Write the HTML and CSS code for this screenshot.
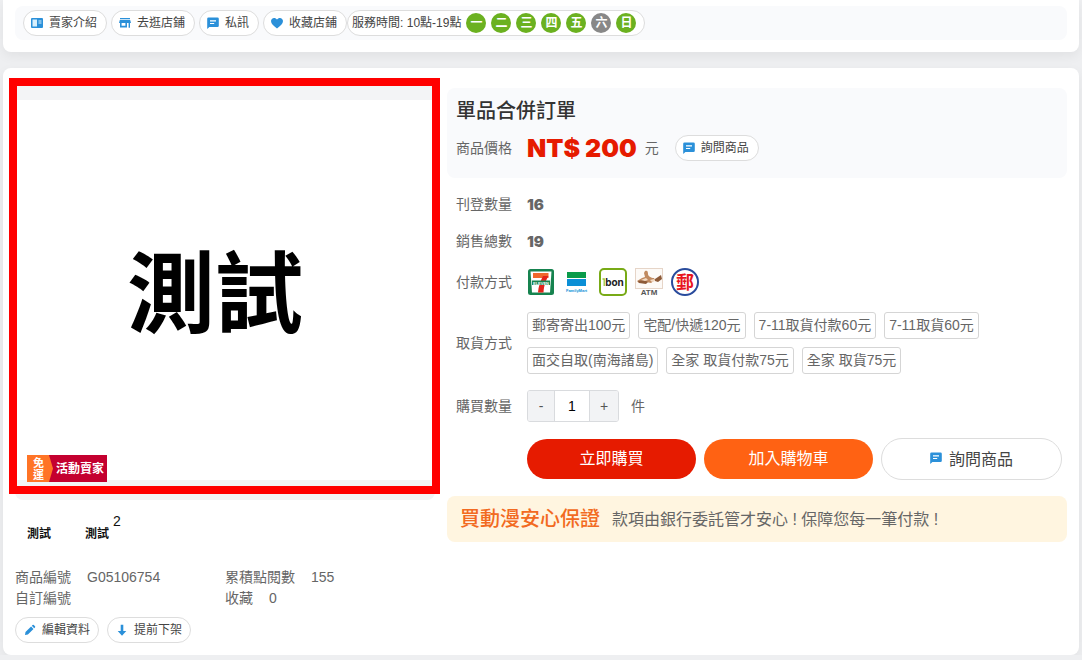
FILE: index.html
```
<!DOCTYPE html>
<html lang="zh-Hant">
<head>
    <meta charset="UTF-8">
    <meta name="viewport" content="width=device-width, initial-scale=1.0">
    <title>單品合併訂單</title>
    <link rel="stylesheet" href="styles.css">
</head>
<body>
    <svg class="symbols" aria-hidden="true">
        <symbol id="icon-chat" viewBox="0 0 12 12">
            <path d="M1.5 0.5h9a1.3 1.3 0 0 1 1.3 1.3v7a1.3 1.3 0 0 1-1.3 1.3H2.4L0.2 12V1.8A1.3 1.3 0 0 1 1.5 0.5z" fill="#2b90d9"/>
            <path d="M3 3.8h6M3 6.5h4.2" stroke="#fff" stroke-width="1.2"/>
        </symbol>
    </svg>

    <header class="card seller">
        <div class="seller-bar">
            <nav class="seller-links">
                <a href="#" class="pill">
                    <svg class="icon" viewBox="0 0 12 12"><path d="M1 1h10a1 1 0 0 1 1 1v8a1 1 0 0 1-1 1H1a1 1 0 0 1-1-1V2a1 1 0 0 1 1-1z" fill="#2b90d9"/><path d="M1.5 2.5H6v7H1.5z" fill="#d9f0fc"/><path d="M7.5 4h3M7.5 6h3" stroke="#d9f0fc"/></svg>
                    賣家介紹
                </a>
                <a href="#" class="pill">
                    <svg class="icon" viewBox="0 0 12 12"><path d="M1 1h10v1.2H1zM0.8 3h10.4l0.8 3H0zM1 6h1.6v2.8h3.8V6H8v4.6H1zM9.6 6h1.4v4.8H9.6z" fill="#2b90d9"/></svg>
                    去逛店鋪
                </a>
                <a href="#" class="pill">
                    <svg class="icon"><use href="#icon-chat"/></svg>
                    私訊
                </a>
                <a href="#" class="pill">
                    <svg class="icon" viewBox="0 0 12 12"><path d="M6 11.6C2.5 8.8 0 6.8 0 4.1 0 2.2 1.4 0.9 3.1 0.9c1.2 0 2.2 0.6 2.9 1.6C6.7 1.5 7.7 0.9 8.9 0.9 10.6 0.9 12 2.2 12 4.1 12 6.8 9.5 8.8 6 11.6z" fill="#2b90d9"/></svg>
                    收藏店鋪
                </a>
            </nav>
            <div class="pill hours">
                <span>服務時間: 10點-19點</span>
                <span class="day">一</span>
                <span class="day">二</span>
                <span class="day">三</span>
                <span class="day">四</span>
                <span class="day">五</span>
                <span class="day day-off">六</span>
                <span class="day">日</span>
            </div>
        </div>
    </header>

    <main class="card product">
        <section class="media">
            <div class="gallery">
                <div class="photo">測試</div>
                <div class="frame"></div>
                <div class="badge">
                    <span class="badge-free">免<br>運</span>
                    <span class="badge-text">活動賣家</span>
                </div>
            </div>
            <div class="thumbs">
                <span class="thumb">測試</span>
                <span class="thumb">測試<sup>2</sup></span>
            </div>
            <div class="meta">
                <div>商品編號<span class="meta-value">G05106754</span></div>
                <div>累積點閱數<span class="meta-value">155</span></div>
                <div>自訂編號</div>
                <div>收藏<span class="meta-value">0</span></div>
            </div>
            <div class="tools">
                <button type="button" class="pill">
                    <svg class="icon" viewBox="0 0 12 12"><path d="M1 11l0.5-2.9L7.1 2.5l2.4 2.4L3.9 10.5zM7.8 1.8l0.8-0.8q0.6-0.5 1.2 0l1.2 1.2q0.5 0.6 0 1.2l-0.8 0.8z" fill="#2b90d9"/></svg>
                    編輯資料
                </button>
                <button type="button" class="pill">
                    <svg class="icon" viewBox="0 0 12 12"><path d="M4.7 0.8h2.6v6.2h3L6 11.8 1.7 7h3z" fill="#2b90d9"/></svg>
                    提前下架
                </button>
            </div>
        </section>

        <section class="info">
            <div class="summary">
                <h1>單品合併訂單</h1>
                <div class="price-row">
                    <span class="label">商品價格</span>
                    <strong class="price">NT$ 200</strong>
                    <span class="unit">元</span>
                    <button type="button" class="pill">
                        <svg class="icon"><use href="#icon-chat"/></svg>
                        詢問商品
                    </button>
                </div>
            </div>

            <div class="details">
                <div class="row">
                    <span class="label">刊登數量</span>
                    <strong class="count">16</strong>
                </div>
                <div class="row">
                    <span class="label">銷售總數</span>
                    <strong class="count">19</strong>
                </div>
                <div class="row">
                    <span class="label">付款方式</span>
                    <div class="payments">
                        <svg viewBox="0 0 28 28" role="img" aria-label="7-11">
                            <rect x="1" y="1" width="26" height="26" rx="2.5" fill="#16834f"/>
                            <path d="M3.5 3.5h21l-1.5 21h-18z" fill="#fff"/>
                            <path d="M6 5h15.5v5H6z" fill="#f0682c"/>
                            <path d="M16 8h5.5c-2.5 4-4.5 9-5 16.5h-5.5c0.4-6 2.5-12 5-16.5z" fill="#e2231a"/>
                            <rect x="5" y="12.5" width="18" height="4.5" fill="#16834f"/>
                            <text x="14" y="16.5" class="logo-eleven">ELEVEN</text>
                        </svg>
                        <svg viewBox="0 0 28 28" role="img" aria-label="FamilyMart">
                            <rect x="4" y="4" width="19" height="6" fill="#0a9b4a"/>
                            <rect x="4" y="11" width="19" height="7" fill="#0b8fd6"/>
                            <text x="13.5" y="23.5" class="logo-family">FamilyMart</text>
                        </svg>
                        <svg viewBox="0 0 28 28" role="img" aria-label="ibon">
                            <rect x="1" y="1" width="26" height="26" rx="4" fill="#fff" stroke="#78aa16" stroke-width="2"/>
                            <path d="M3.5 11h1.7v7" fill="none" stroke="#9bc93c" stroke-width="1.3"/>
                            <text x="15.5" y="18" class="logo-ibon">bon</text>
                        </svg>
                        <svg viewBox="0 0 28 28" role="img" aria-label="ATM">
                            <rect x="0.5" y="0.5" width="27" height="20" fill="#fdfaf7" stroke="#e6d5c8"/>
                            <path d="M10 3c2-1 3 0 3 3 0 2 3 4 6 4l1 2-4 3-5-1-7 1-2-2 5-3 3-1-1-4z" fill="#c08a60"/>
                            <path d="M3 13l6-1 4 2-2 2-7-1zM20 11l6-4 1 4-4 3-3-1z" fill="#8d5a38"/>
                            <path d="M6 12l5-2 2 2-3 1zM15 12l4-1 1 2-3 1z" fill="#f3dac3"/>
                            <text x="14" y="27" class="logo-atm">ATM</text>
                        </svg>
                        <svg viewBox="0 0 28 28" role="img" aria-label="郵局">
                            <circle cx="14" cy="14" r="13" fill="#fff" stroke="#294b9c" stroke-width="2"/>
                            <text x="14" y="20.5" class="logo-post">郵</text>
                        </svg>
                    </div>
                </div>
                <div class="row">
                    <span class="label">取貨方式</span>
                    <div class="tags">
                        <span class="tag">郵寄寄出100元</span>
                        <span class="tag">宅配/快遞120元</span>
                        <span class="tag">7-11取貨付款60元</span>
                        <span class="tag">7-11取貨60元</span>
                        <span class="tag">面交自取(南海諸島)</span>
                        <span class="tag">全家 取貨付款75元</span>
                        <span class="tag">全家 取貨75元</span>
                    </div>
                </div>
                <div class="row">
                    <label class="label" for="qty">購買數量</label>
                    <div class="stepper">
                        <button type="button" onclick="changeQty(-1)">-</button>
                        <input type="text" id="qty" value="1" inputmode="numeric">
                        <button type="button" onclick="changeQty(1)">+</button>
                    </div>
                    <span class="piece">件</span>
                </div>
                <div class="actions">
                    <button type="button" class="action buy">立即購買</button>
                    <button type="button" class="action cart">加入購物車</button>
                    <button type="button" class="action ask">
                        <svg class="icon"><use href="#icon-chat"/></svg>
                        詢問商品
                    </button>
                </div>
            </div>

            <div class="guarantee">
                <strong>買動漫安心保證</strong>
                <span>款項由銀行委託管才安心 ! 保障您每一筆付款 !</span>
            </div>
        </section>
    </main>

    <script>
        function changeQty(step) {
            const input = document.getElementById("qty");
            const value = parseInt(input.value, 10) || 1;
            input.value = Math.min(16, Math.max(1, value + step));
        }
    </script>
</body>
</html>
```

FILE: styles.css
```
* {
    box-sizing: border-box;
}
body {
    margin: 0;
    background-color: #eeeff1;
    color: #666;
    font-family: "Liberation Sans", "Noto Sans CJK TC", sans-serif;
    font-size: 14px;
    line-height: 21px;
}
button,
input {
    font-family: inherit;
}
.symbols {
    display: none;
}
.card {
    margin: 0 3px 16px;
    padding: 12px;
    background-color: #fff;
    border-radius: 8px;
    box-shadow: 0 4px 12px rgba(0, 0, 0, 0.06);
}
.seller {
    padding-top: 6px;
    border-radius: 0 0 8px 8px;
}
.seller-bar {
    display: flex;
    padding: 4px 8px;
    background-color: #f9fafc;
    border-radius: 8px;
}
.seller-links {
    display: flex;
    gap: 4px;
}
.pill {
    display: flex;
    align-items: center;
    gap: 6px;
    height: 26px;
    padding: 0 9px 0 7px;
    border: 1px solid #ddd;
    border-radius: 13px;
    background-color: #fff;
    color: #444;
    font-size: 12px;
    line-height: 24px;
    text-decoration: none;
    white-space: nowrap;
}
.icon {
    width: 12px;
    height: 12px;
    flex: none;
}
.hours {
    gap: 5px;
    padding: 0 8px 0 4px;
}
.day {
    width: 20px;
    height: 20px;
    border-radius: 50%;
    background-color: #6bb120;
    color: #fff;
    font-weight: bold;
    line-height: 20px;
    text-align: center;
}
.day-off {
    background-color: #888;
}

.product {
    display: grid;
    grid-template-columns: 420fr 620fr;
    gap: 12px;
    margin-bottom: 0;
}
.gallery {
    position: relative;
    padding: 20px 0;
    background-color: #f3f4f6;
    border-radius: 8px;
}
.photo {
    display: flex;
    align-items: center;
    justify-content: center;
    height: 380px;
    padding: 0 20px 6px 0;
    background-color: #fff;
    color: #000;
    font-family: "Noto Sans CJK TC", sans-serif;
    font-size: 88px;
    font-weight: bold;
    line-height: 90px;
}
.frame {
    position: absolute;
    inset: -2px -5px 6px -6px;
    border: 8px solid #f00;
}
.badge {
    position: absolute;
    left: 12px;
    bottom: 18px;
    display: flex;
    width: 80px;
    height: 27px;
    background-color: #c4002f;
    color: #fff;
    font-weight: bold;
}
.badge-free {
    width: 26px;
    padding: 2px 4px 0 6px;
    background-color: #ff7426;
    clip-path: polygon(0 0, 22px 0, 26px 50%, 22px 100%, 0 100%);
    font-size: 11px;
    line-height: 12px;
}
.badge-text {
    padding-left: 3px;
    font-size: 12px;
    line-height: 28px;
}
.thumbs {
    display: flex;
    gap: 34px;
    height: 67px;
    padding: 24px 12px 0;
    color: #111;
    font-size: 12px;
    font-weight: bold;
}
.thumb {
    position: relative;
}
.thumb sup {
    position: absolute;
    left: 28px;
    top: -13px;
    font-size: 14px;
    font-weight: normal;
}
.meta {
    display: grid;
    grid-template-columns: 1fr 1fr;
}
.meta-value {
    margin-left: 16px;
}
.tools {
    display: flex;
    gap: 8px;
    margin-top: 8px;
}
.tools .pill {
    padding: 0 8px;
}

.info {
    padding-top: 8px;
}
.summary {
    padding: 8px 9px;
    background-color: #f9fafc;
    border-radius: 8px;
}
h1 {
    margin: 0;
    color: #333;
    font-size: 20px;
    font-weight: 500;
    line-height: 30px;
}
.price-row {
    display: flex;
    align-items: center;
    height: 44px;
}
.label {
    flex: none;
    width: 71px;
}
.price,
.count {
    font-family: Inter, "Liberation Sans", sans-serif;
    font-weight: 900;
}
.price {
    margin-right: 8px;
    color: #e61b00;
    font-size: 25px;
    line-height: 30px;
}
.count {
    font-size: 15px;
}
.unit {
    margin-right: 16px;
}
.details {
    padding: 8px 5px 16px 9px;
}
.row {
    display: flex;
    align-items: center;
    padding: 8px 0;
}
.payments {
    display: flex;
    gap: 8px;
}
.payments svg {
    width: 28px;
    height: 28px;
    overflow: visible;
}
.payments text {
    text-anchor: middle;
    font-weight: bold;
}
.logo-eleven {
    fill: #fff;
    font-size: 4px;
}
.logo-family {
    fill: #0b8fd6;
    font-size: 4px;
}
.logo-ibon {
    fill: #222;
    font-family: Inter, sans-serif;
    font-size: 10px;
}
.logo-atm {
    fill: #555;
    font-size: 8px;
}
.logo-post {
    fill: #e8161e;
    font-size: 18px;
}
.tags {
    display: flex;
    flex-wrap: wrap;
    gap: 8px;
}
.tag {
    height: 27px;
    padding: 0 4px;
    border: 1px solid #d5d5d5;
    border-radius: 3px;
    line-height: 25px;
    white-space: nowrap;
}
.stepper {
    display: flex;
    height: 32px;
    border: 1px solid #d9dbde;
    border-radius: 3px;
    overflow: hidden;
}
.stepper button {
    width: 26px;
    padding: 0;
    border: none;
    background-color: #f2f3f5;
    color: #555;
    font-size: 14px;
}
.stepper button:last-child {
    width: 28px;
}
.stepper input {
    width: 36px;
    padding: 0;
    border: solid #d9dbde;
    border-width: 0 1px;
    color: #000;
    font-size: 14px;
    text-align: center;
}
.piece {
    margin-left: 12px;
}
.actions {
    display: grid;
    grid-template-columns: 169fr 169fr 181fr;
    align-items: center;
    gap: 8px;
    margin: 8px 0 0 71px;
}
.action {
    height: 40px;
    padding: 0 6px 4px;
    border: none;
    border-radius: 21px;
    color: #fff;
    font-size: 16px;
}
.buy {
    background-color: #e61b00;
}
.cart {
    background-color: #ff6213;
}
.ask {
    display: flex;
    align-items: center;
    justify-content: center;
    gap: 7px;
    height: 42px;
    padding-bottom: 2px;
    border: 1px solid #ddd;
    background-color: #fff;
    color: #444;
}
.guarantee {
    display: flex;
    align-items: center;
    gap: 12px;
    min-height: 46px;
    padding: 8px 13px;
    background-color: #fff5e0;
    border-radius: 8px;
    font-size: 16px;
}
.guarantee strong {
    color: #f26a21;
    font-size: 20px;
    font-weight: 500;
}
```
